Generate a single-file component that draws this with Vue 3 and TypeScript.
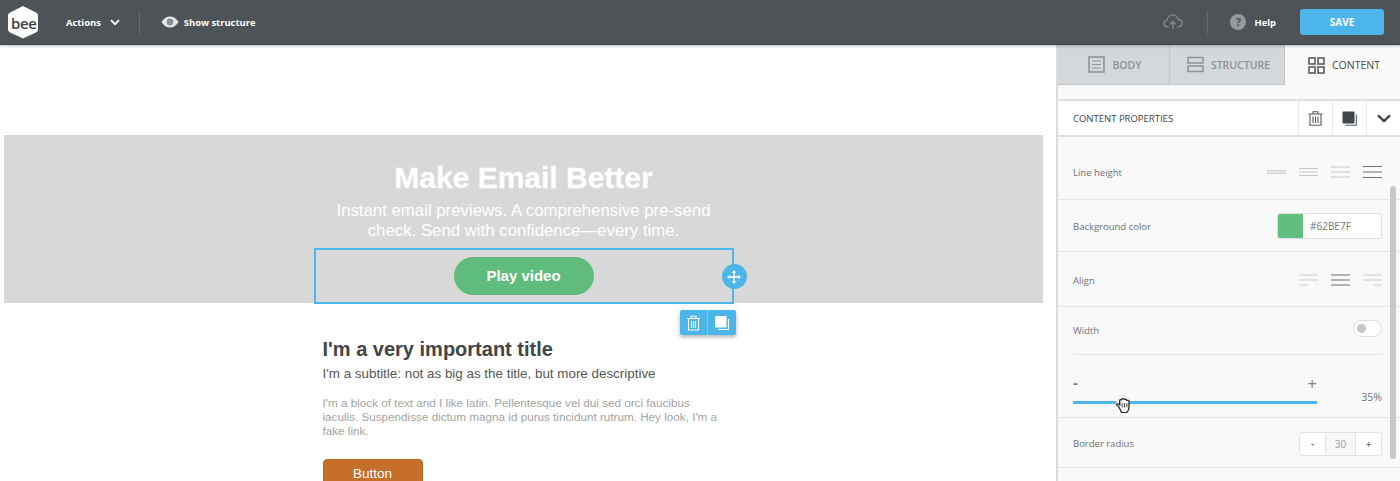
<script setup lang="ts">
const hero = {
  title: 'Make Email Better',
  text: 'Instant email previews. A comprehensive pre-send check. Send with confidence—every time.',
};
</script>

<template>
  <div class="app">
    <header class="topbar">
      <div class="logo">
        <svg width="32" height="34" viewBox="0 0 32 36" preserveAspectRatio="none">
          <path d="M16 1 L29 8 Q31 9 31 11 L31 26 Q31 28 29 29 L17 35 Q16 35.6 15 35 L3 29 Q1 28 1 26 L1 11 Q1 9 3 8 Z" fill="#fff" />
        </svg>
        <span class="logo-text">bee</span>
      </div>
      <span class="actions">Actions</span>
      <svg class="chev" width="10" height="7" viewBox="0 0 10 7"><path d="M1 1.2 5 5.2 9 1.2" fill="none" stroke="#fff" stroke-width="1.8" /></svg>
      <span class="vsep first"></span>
      <svg class="eye" width="18" height="12" viewBox="0 0 18 12">
        <path d="M0.5 6C3 2 6 .5 9 .5S15 2 17.5 6C15 10 12 11.5 9 11.5S3 10 .5 6Z" fill="#e8eaea" />
        <circle cx="9" cy="6" r="3.4" fill="#8a8f91" />
      </svg>
      <span class="structure">Show structure</span>
      <span class="spacer"></span>
      <svg class="cloud" width="20" height="16" viewBox="0 0 20 16">
        <path d="M6 13H4.5C2.500 13 1 11.500 1 9.600 1 7.800 2.300 6.500 4 6.300 4.500 3.300 6.800 1 9.800 1c2.700 0 4.800 1.800 5.400 4.300 2.200 0 3.800 1.700 3.800 3.800 0 2.200-1.600 3.900-3.800 3.900H14" fill="none" stroke="#8b9092" stroke-width="1.2" />
        <path d="M10 15.500V8M7 10.500 10 7.500 13 10.500" fill="none" stroke="#8b9092" stroke-width="1.2" />
      </svg>
      <span class="vsep second"></span>
      <span class="help-dot">?</span>
      <span class="help">Help</span>
      <button class="save">SAVE</button>
    </header>

    <div class="workspace">
      <main class="canvas">
        <section class="hero">
          <h1>{{ hero.title }}</h1>
          <p>{{ hero.text }}</p>
          <div class="selected">
            <a class="play">Play video</a>
            <span class="move">
              <svg width="14" height="14" viewBox="0 0 14 14">
                <path d="M7 1.500V12.500M1.500 7H12.500" stroke="#fff" stroke-width="1.400" />
                <path d="M7 0 9.300 2.800H4.700ZM7 14 4.700 11.200H9.300ZM0 7 2.800 4.700V9.300ZM14 7 11.200 9.300V4.700Z" fill="#fff" />
              </svg>
            </span>
            <div class="tools">
              <span class="tool">
                <svg width="15" height="16" viewBox="0 0 15 16">
                  <path d="M1 3.500H14M5 3.500V1.200H10V3.500M2.500 3.500V15H12.500V3.500M5.500 6V13M7.500 6V13M9.500 6V13" fill="none" stroke="#fff" stroke-width="1.100" />
                </svg>
              </span>
              <span class="tool">
                <svg width="16" height="16" viewBox="0 0 16 16">
                  <rect x="1" y="1" width="11.500" height="11.500" rx="1" fill="#fff" />
                  <path d="M14.500 4V14.500H4" fill="none" stroke="#fff" stroke-width="1.200" />
                </svg>
              </span>
            </div>
          </div>
        </section>
        <section class="copy">
          <h2>I'm a very important title</h2>
          <h3>I'm a subtitle: not as big as the title, but more descriptive</h3>
          <p>I'm a block of text and I like latin. Pellentesque vel dui sed orci faucibus iaculis. Suspendisse dictum magna id purus tincidunt rutrum. Hey look, I'm a fake link.</p>
          <a class="orange">Button</a>
        </section>
      </main>

      <aside class="side">
        <nav class="tabs">
          <div class="tab off body">
            <svg width="17" height="17" viewBox="0 0 17 17"><rect x="1" y="1" width="15" height="15" fill="none" stroke="#8d9396" stroke-width="1.600" /><path d="M4 5H13M4 8.500H13M4 12H13" stroke="#8d9396" stroke-width="1.200" /></svg>
            <span>BODY</span>
          </div>
          <div class="tab off">
            <svg width="17" height="17" viewBox="0 0 17 17"><rect x="1" y="1.500" width="15" height="5.500" fill="none" stroke="#8d9396" stroke-width="1.500" /><rect x="1" y="10" width="15" height="5.500" fill="none" stroke="#8d9396" stroke-width="1.500" /></svg>
            <span>STRUCTURE</span>
          </div>
          <div class="tab on">
            <svg width="17" height="17" viewBox="0 0 17 17"><g fill="none" stroke="#4c5356" stroke-width="1.500"><rect x="1" y="1" width="6" height="6" /><rect x="10" y="1" width="6" height="6" /><rect x="1" y="10" width="6" height="6" /><rect x="10" y="10" width="6" height="6" /></g></svg>
            <span>CONTENT</span>
          </div>
        </nav>

        <div class="panel-head">
          <span class="panel-title">CONTENT PROPERTIES</span>
          <span class="head-btn">
            <svg width="15" height="15" viewBox="0 0 15 15"><path d="M0.500 3H14.500M5 3V0.800H10V3M2 3V14.300H13V3M5 5.500V12M7.500 5.500V12M10 5.500V12" fill="none" stroke="#565c5f" stroke-width="1.100" /></svg>
          </span>
          <span class="head-btn">
            <svg width="15" height="15" viewBox="0 0 15 15"><rect x="0.500" y="0.500" width="12" height="12" rx="1" fill="#3f4548" /><path d="M14.300 3.500V14.300H3.500" fill="none" stroke="#565c5f" stroke-width="1.100" /></svg>
          </span>
          <span class="head-btn">
            <svg width="14" height="9" viewBox="0 0 14 9"><path d="M1 1.300 7 7 13 1.300" fill="none" stroke="#3f4548" stroke-width="2.400" /></svg>
          </span>
        </div>

        <div class="props">
          <div class="row r-line">
            <span class="lbl">Line height</span>
            <div class="icons">
              <svg width="19" height="10" viewBox="0 0 19 10"><path d="M0 3.500H19M0 5H19M0 6.500H19" stroke="#cfd2d3" stroke-width="1.200" /></svg>
              <svg width="19" height="10" viewBox="0 0 19 10"><path d="M0 1.500H19M0 5H19M0 8.500H19" stroke="#c6c9ca" stroke-width="1" /></svg>
              <svg width="19" height="12" viewBox="0 0 19 12"><path d="M0 1H19M0 6H19M0 11H19" stroke="#c6c9ca" stroke-width="1" /></svg>
              <svg width="19" height="12" viewBox="0 0 19 12"><path d="M0 .5H19M0 6H19M0 11.500H19" stroke="#6d7375" stroke-width="1" /></svg>
            </div>
          </div>
          <div class="row r-bg">
            <span class="lbl">Background color</span>
            <div class="color"><i class="swatch"></i><span>#62BE7F</span></div>
          </div>
          <div class="row r-align">
            <span class="lbl">Align</span>
            <div class="icons">
              <svg width="19" height="12" viewBox="0 0 19 12"><path d="M0 1H19M0 6H19M0 11H9" stroke="#c9cccd" stroke-width="1" /></svg>
              <svg width="19" height="12" viewBox="0 0 19 12"><path d="M0 1H19M0 6H19M0 11H19" stroke="#6d7375" stroke-width="1.100" /></svg>
              <svg width="19" height="12" viewBox="0 0 19 12"><path d="M0 1H19M0 6H19M10 11H19" stroke="#c9cccd" stroke-width="1" /></svg>
            </div>
          </div>
          <div class="r-width">
            <span class="lbl">Width</span>
            <span class="toggle"><i></i></span>
          </div>
          <div class="r-slider">
            <div class="slider-col">
              <div class="pm"><span class="minus">-</span><span class="plus">+</span></div>
              <div class="track"><span class="knob"></span></div>
            </div>
            <span class="pct">35%</span>
            <svg class="hand" width="19" height="17" viewBox="0 0 16 18" preserveAspectRatio="none">
              <path d="M3.500 11 1.500 8.500C1 7.500 2.300 6.800 3 7.500L4 8.500V3.500C4 2.300 5.600 2.300 5.800 3.500V2.500C5.800 1.200 7.600 1.200 7.800 2.500V3C8 1.900 9.700 2 9.800 3.200V4.200C10 3.200 11.700 3.300 11.800 4.500V10.500C11.800 13.500 11 15 10 16.500H5.500C4.800 14.500 4.300 12.500 3.500 11Z" fill="#fff" stroke="#222" stroke-width="1.100" />
              <path d="M6 6.500V11M8 6.500V11M10 6.500V11" stroke="#222" stroke-width=".8" />
            </svg>
          </div>
          <div class="row r-radius">
            <span class="lbl">Border radius</span>
            <div class="stepper"><b>-</b><span>30</span><b>+</b></div>
          </div>
        </div>
        <span class="thumb"></span>
      </aside>
    </div>
  </div>
</template>

<style>
html, body { margin: 0; overflow: hidden; background: #fff; }
</style>

<style scoped>
.app {
  width: 1400px;
  height: 481px;
  overflow: hidden;
  display: flex;
  flex-direction: column;
  font-family: "Open Sans", "Noto Sans", sans-serif;
}
.topbar {
  flex: 0 0 45px;
  box-sizing: border-box;
  height: 45px;
  display: flex;
  align-items: center;
  background: #4d5356;
  border-bottom: 1px solid #3f4447;
  box-shadow: 0 1px 3px rgba(0, 0, 0, .25);
  color: #fff;
  position: relative;
  z-index: 3;
  font-size: 9.400px;
  font-weight: 700;
}
.logo { position: relative; margin-left: 7px; width: 32px; height: 34px; }
.logo svg { display: block; }
.logo-text {
  position: absolute;
  left: 4px;
  top: 7px;
  font-size: 15px;
  line-height: 22px;
  letter-spacing: -.4px;
  font-weight: 600;
  color: #3c4144;
}
.actions { margin-left: 27px; }
.chev { margin-left: 9px; }
.vsep { width: 1px; height: 23px; background: #656a6d; }
.vsep.first { margin-left: 19px; }
.eye { margin-left: 21px; }
.structure { margin-left: 5px; }
.spacer { flex: 1; }
.cloud { margin-right: 24px; }
.vsep.second { margin-right: 22px; }
.help-dot {
  width: 16px;
  height: 16px;
  border-radius: 50%;
  background: #96999b;
  color: #4d5356;
  font-size: 11px;
  font-weight: 700;
  text-align: center;
  line-height: 16px;
}
.help { margin-left: 8px; margin-right: 24px; font-weight: 700; }
.save {
  width: 84px;
  height: 26px;
  margin-right: 16px;
  border: 0;
  padding: 0;
  border-radius: 3px;
  background: #4cb6ea;
  color: #fff;
  font-family: inherit;
  font-size: 10px;
  font-weight: 700;
}
.workspace { flex: 1; display: flex; min-height: 0; }
.canvas { flex: 0 0 1056px; box-sizing: border-box; padding: 90px 13px 0 4px; }
.hero {
  height: 168px;
  background: #d8d8d8;
  box-sizing: border-box;
  padding-top: 25px;
  text-align: center;
  font-family: "Liberation Sans", Arial, sans-serif;
  color: #fff;
}
.hero h1 { margin: 0; font-size: 30px; line-height: 36px; font-weight: 700; -webkit-text-stroke: .3px #fff; }
.hero p { width: 400px; margin: 5px auto 0; font-size: 16.800px; line-height: 20px; }
.selected {
  position: relative;
  box-sizing: border-box;
  width: 420px;
  height: 56px;
  margin: 7px auto 0;
  border: 2px solid #4cb6ea;
  display: flex;
  justify-content: center;
  padding-top: 6px;
}
.play {
  width: 142px;
  height: 40px;
  box-sizing: border-box;
  border-radius: 20px;
  background: #5fbc7c;
  border: 1px solid #e3dedd;
  color: #fff;
  font-size: 15px;
  font-weight: 700;
  line-height: 37px;
}
.move {
  position: absolute;
  right: -15px;
  top: 14px;
  width: 25px;
  height: 25px;
  border-radius: 50%;
  background: #4cb6ea;
  display: flex;
  align-items: center;
  justify-content: center;
}
.tools {
  position: absolute;
  right: -4px;
  top: 60px;
  width: 56px;
  height: 25px;
  border-radius: 2px;
  background: #4cb6ea;
  box-shadow: 0 2px 4px rgba(0, 0, 0, .3);
  display: flex;
}
.tool { flex: 1; display: flex; align-items: center; justify-content: center; }
.tool + .tool { border-left: 1px solid #7fcbf0; }
.copy {
  box-sizing: border-box;
  width: 420px;
  margin: 0 auto;
  padding: 33px 0 0 9px;
  font-family: "Liberation Sans", Arial, sans-serif;
}
.copy h2 { margin: 0; font-size: 20px; line-height: 26px; font-weight: 700; color: #444; }
.copy h3 { margin: 2px 0 0; font-size: 13.400px; line-height: 20px; font-weight: 400; color: #555; }
.copy p { margin: 12px 0 0; width: 400px; font-size: 11.700px; line-height: 14px; color: #a3a3a3; }
.orange {
  display: block;
  margin-top: 21px;
  width: 100px;
  height: 40px;
  box-sizing: border-box;
  border-radius: 4px;
  background: #c66f2b;
  border: 1px solid #b9641f;
  padding-top: 8px;
  color: #fff;
  font-size: 13.500px;
  line-height: 12px;
  text-align: center;
}
.side {
  flex: 0 0 344px;
  box-sizing: border-box;
  position: relative;
  background: #f9f9f9;
  border-left: 2px solid #d9dbdc;
  color: #6f7578;
  font-size: 10px;
}
.tabs { display: flex; height: 40px; }
.tab {
  flex: 0 0 115px;
  box-sizing: border-box;
  padding-left: 3px;
  display: flex;
  align-items: center;
  justify-content: center;
  gap: 7px;
  font-size: 10.500px;
  font-weight: 600;
}
.tab.body { flex-basis: 112px; }
.tab.off {
  background: #d4d8da;
  border-right: 1px solid #c3c7c9;
  border-bottom: 1px solid #c3c7c9;
  color: #8d9396;
}
.tab.on { color: #44494c; font-weight: 400; }
.panel-head {
  margin-top: 14px;
  height: 38px;
  box-sizing: border-box;
  display: flex;
  align-items: center;
  background: #fff;
  border-top: 2px solid #dddfe0;
  border-bottom: 2px solid #dddfe0;
  padding-left: 15px;
}
.panel-title { flex: 1; font-size: 9.500px; font-weight: 500; color: #3f4548; }
.head-btn {
  width: 33px;
  height: 100%;
  border-left: 1px solid #e6e7e8;
  display: flex;
  align-items: center;
  justify-content: center;
}
.props { padding: 0 18px 0 15px; }
.row {
  display: flex;
  align-items: center;
  justify-content: space-between;
  margin: 0 -18px 0 -15px;
  padding: 0 18px 0 15px;
  border-bottom: 1px solid #e4e6e7;
  box-sizing: border-box;
}
.lbl { font-size: 9.500px; color: #6c7275; }
.r-line { height: 63px; padding-top: 8px; }
.r-bg { height: 52px; padding-top: 1px; }
.r-align { height: 55px; padding-top: 2px; }
.r-width {
  height: 48px;
  box-sizing: border-box;
  display: flex;
  justify-content: space-between;
  align-items: flex-start;
  padding-top: 13px;
  border-bottom: 1px solid #e4e6e7;
}
.r-width .lbl { margin-top: 4px; }
.icons { display: flex; align-items: center; gap: 13px; }
.color {
  width: 105px;
  height: 26px;
  box-sizing: border-box;
  display: flex;
  align-items: center;
  background: #fff;
  border: 1px solid #dcdedf;
  border-radius: 3px;
  overflow: hidden;
  font-size: 10px;
  color: #6f7578;
}
.swatch { width: 25px; height: 100%; background: #62be7f; margin-right: 7px; }
.toggle {
  width: 29px;
  height: 17px;
  box-sizing: border-box;
  background: #fff;
  border: 1px solid #dde0e1;
  border-radius: 9px;
  padding: 3px 0 0 3px;
}
.toggle i { display: block; width: 9px; height: 9px; border-radius: 50%; background: #c6c8c9; }
.r-slider {
  position: relative;
  height: 63px;
  display: flex;
  justify-content: space-between;
  margin: 0 -18px 0 -15px;
  padding: 0 18px 0 15px;
  border-bottom: 1px solid #e1e3e4;
  box-sizing: border-box;
}
.slider-col { width: 244px; }
.pm { display: flex; justify-content: space-between; align-items: center; height: 20px; margin-top: 18px; color: #7d8386; font-size: 15px; }
.minus { font-weight: 700; margin-top: -2px; }
.plus { font-size: 17px; }
.track { position: relative; height: 3px; margin-top: 8px; background: #4cb6ea; }
.knob {
  position: absolute;
  left: 43px;
  top: -6px;
  width: 14px;
  height: 14px;
  border-radius: 50%;
  background: #fff;
  border: 1px solid #dedede;
  box-sizing: border-box;
}
.pct { font-size: 10.500px; font-weight: 400; color: #6f7578; margin-top: 35px; }
.hand { position: absolute; left: 57px; top: 42px; }
.r-radius { height: 50px; padding-top: 2px; }
.stepper {
  display: flex;
  width: 83px;
  height: 24px;
  box-sizing: border-box;
  border: 1px solid #e0e2e3;
  border-radius: 3px;
  background: #fff;
  font-size: 10px;
  line-height: 22px;
  text-align: center;
  color: #6f7578;
}
.stepper b { width: 25px; font-weight: 600; }
.stepper span { flex: 1; background: #f7f7f7; color: #9a9fa1; border-left: 1px solid #e0e2e3; border-right: 1px solid #e0e2e3; }
.thumb {
  position: absolute;
  left: 332px;
  top: 141px;
  width: 6px;
  height: 273px;
  border-radius: 3px;
  background: #c8c8c8;
}
</style>
